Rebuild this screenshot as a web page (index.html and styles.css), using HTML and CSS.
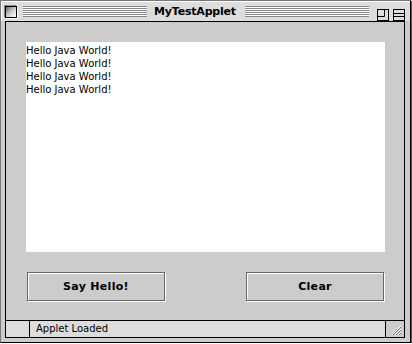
FILE: index.html
```html
<!DOCTYPE html>
<html lang="en">
<head>
    <meta charset="UTF-8">
    <title>MyTestApplet</title>
    <link rel="stylesheet" href="styles.css">
</head>
<body>
    <div class="window">
        <div class="titlebar">
            <div class="tbox close-box"></div>
            <div class="stripes"></div>
            <div class="title">MyTestApplet</div>
            <div class="stripes"></div>
            <div class="tbox zoom-box">
                <svg width="12" height="12" viewBox="0 0 12 12">
                    <rect x="0.5" y="0.5" width="11" height="11" fill="#ddd" stroke="#000"/>
                    <path d="M0.5 7.5H7.5V0.5" fill="none" stroke="#000"/>
                </svg>
            </div>
            <div class="tbox collapse-box">
                <svg width="12" height="12" viewBox="0 0 12 12">
                    <rect x="0.5" y="0.5" width="11" height="11" fill="#ddd" stroke="#000"/>
                    <path d="M0.5 4.5H11.5M0.5 7.5H11.5" fill="none" stroke="#000"/>
                </svg>
            </div>
        </div>
        <div class="frame">
            <div class="content">
                <div class="applet">
                    <div class="output">
                        <div>Hello Java World!</div>
                        <div>Hello Java World!</div>
                        <div>Hello Java World!</div>
                        <div>Hello Java World!</div>
                    </div>
                    <div class="buttons">
                        <button class="btn">Say Hello!</button>
                        <button class="btn">Clear</button>
                    </div>
                </div>
                <div class="status">
                    <div class="status-cell"></div>
                    <div class="status-text">Applet Loaded</div>
                    <div class="grow-box">
                        <svg width="16" height="16" viewBox="0 0 16 16">
                            <path d="M5 14L14 5M8 14L14 8M11 14L14 11" stroke="#fff" stroke-width="1"/>
                            <path d="M6 14L14 6M9 14L14 9M12 14L14 12" stroke="#777" stroke-width="1"/>
                        </svg>
                    </div>
                </div>
            </div>
        </div>
    </div>
</body>
</html>
```

FILE: styles.css
```css
* {
    box-sizing: border-box;
    margin: 0;
    padding: 0;
}

body {
    background: #fff;
    font-family: 'DejaVu Sans', sans-serif;
}

.window {
    width: 411px;
    height: 343px;
    background: #ccc;
    border: 1px solid #000;
    border-top-color: #777;
    border-left-color: #777;
    box-shadow: 1px 1px 0 #555;
    display: flex;
    flex-direction: column;
}

.titlebar {
    height: 20px;
    display: flex;
    align-items: center;
    padding: 0 5px 0 3px;
    background: #ddd;
    border-top: 1px solid #fff;
    border-left: 1px solid #fff;
}

.tbox {
    width: 12px;
    height: 12px;
    flex: none;
}

.close-box {
    border: 1px solid #000;
    background: linear-gradient(135deg, #666 0%, #ccc 50%, #fff 100%);
    box-shadow: 1px 1px 0 #fff, -1px -1px 0 #888;
}

.zoom-box {
    margin-left: 4px;
}

.collapse-box {
    margin-left: 4px;
}

.stripes {
    flex: 1;
    height: 11px;
    margin: 0 4px;
    background: repeating-linear-gradient(to bottom, #888 0, #888 1px, #fff 1px, #fff 2px);
    margin-left: 6px;
}

.title {
    font-family: 'DejaVu Sans', sans-serif;
    font-weight: bold;
    font-size: 11px;
    letter-spacing: -0.2px;
    padding: 0 3px;
    color: #000;
}

.frame {
    flex: 1;
    display: flex;
    padding: 0 5px 4px 4px;
}

.content {
    flex: 1;
    display: flex;
    flex-direction: column;
    border: 1px solid #000;
    background: #ccc;
}

.applet {
    flex: 1;
    padding: 20px 19px 0 20px;
}

.output {
    height: 210px;
    background: #fff;
    padding: 2px 0 0 0;
    font-family: 'DejaVu Sans', sans-serif;
    font-size: 10px;
    line-height: 13px;
    color: #000;
}

.buttons {
    display: flex;
    justify-content: space-between;
    margin-top: 20px;
    padding: 0 1px 0 1px;
}

.btn {
    width: 138px;
    height: 29px;
    background: #ccc;
    border: 1px solid #666;
    box-shadow: 1px 1px 0 #fff, inset 1px 1px 0 #fff;
    font-family: 'DejaVu Sans', sans-serif;
    font-weight: bold;
    font-size: 11px;
    letter-spacing: 0.3px;
    color: #000;
}

.status {
    height: 17px;
    display: flex;
    border-top: 1px solid #000;
    background: #ddd;
}

.status-cell {
    width: 24px;
    border-right: 1px solid #000;
}

.status-text {
    flex: 1;
    font-size: 10px;
    line-height: 16px;
    padding-left: 6px;
    color: #000;
    border-right: 1px solid #000;
}

.grow-box {
    width: 18px;
    display: flex;
    align-items: center;
    justify-content: center;
    background: #ccc;
}
```
